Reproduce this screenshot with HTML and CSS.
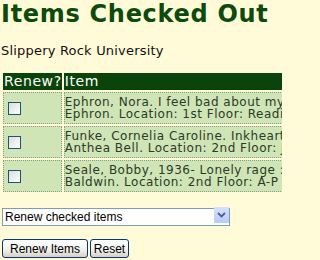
FILE: index.html
```html
<!DOCTYPE html>
<html>
<head>
<meta charset="utf-8">
<title>Items Checked Out</title>
<link rel="stylesheet" href="styles.css">
</head>
<body>
<h1 class="title">Items Checked Out</h1>
<p class="library">Slippery Rock University</p>
<form class="renew-form">
  <div class="table-clip">
  <table class="items">
    <thead>
      <tr>
        <th class="col-renew">Renew?</th>
        <th class="col-item">Item</th>
      </tr>
    </thead>
    <tbody>
      <tr>
        <td class="cell-check"><input type="checkbox" class="check"></td>
        <td class="cell-item">Ephron, Nora. I feel bad about my neck : and other thoughts on being a woman / Nora<br>Ephron. Location: 1st Floor: Reading Room Popular Collection</td>
      </tr>
      <tr>
        <td class="cell-check"><input type="checkbox" class="check"></td>
        <td class="cell-item">Funke, Cornelia Caroline. Inkheart / Cornelia Funke ; translated by<br>Anthea Bell. Location: 2nd Floor: Juvenile Collection</td>
      </tr>
      <tr>
        <td class="cell-check"><input type="checkbox" class="check"></td>
        <td class="cell-item">Seale, Bobby, 1936- Lonely rage : the autobiography of Bobby Seale / introd. by James<br>Baldwin. Location: 2nd Floor: A-P Stacks</td>
      </tr>
    </tbody>
  </table>
  </div>
  <div class="select-wrap">
    <select class="action">
      <option>Renew checked items</option>
      <option>Renew all items</option>
    </select>
    <span class="select-arrow"><svg width="9" height="6" viewBox="0 0 9 6"><path d="M1 1 L4.5 4.5 L8 1" fill="none" stroke="#4d6185" stroke-width="1.8"/></svg></span>
  </div>
  <div class="buttons">
    <button type="submit" class="btn btn-renew">Renew Items</button>
    <button type="reset" class="btn btn-reset">Reset</button>
  </div>
</form>
</body>
</html>
```
FILE: styles.css
```css
html, body {
  overflow: hidden;
}
body {
  margin: 0;
  padding: 0 0 0 1px;
  background: #fffbd8;
  font-family: "DejaVu Sans", Verdana, sans-serif;
  color: #222;
}
.title {
  margin: 0;
  font-size: 24px;
  font-weight: bold;
  line-height: 28px;
  letter-spacing: 0.7px;
  color: #0d4a0d;
  white-space: nowrap;
}
.library {
  margin: 15px 0 0 0;
  font-size: 13px;
  line-height: 15px;
  letter-spacing: 0.2px;
  color: #111;
}
.renew-form {
  margin: 13px 0 0 0;
}
.table-clip {
  overflow: hidden;
  width: 281px;
}
.items {
  border-collapse: separate;
  border-spacing: 2px;
  width: 640px;
}
.items th {
  background: #0b440b;
  color: #fff;
  font-weight: normal;
  font-size: 14px;
  line-height: 17px;
  letter-spacing: 0.6px;
  text-align: left;
  padding: 0 0 0 1px;
  white-space: nowrap;
}
.col-renew {
  width: 57px;
}
.items td {
  background: #cfe5b5;
  border: 1px dotted #8e9e86;
  height: 30px;
  padding: 0;
  vertical-align: middle;
}
.cell-check {
  padding-left: 4px !important;
}
.cell-item {
  font-size: 12px;
  line-height: 12px;
  letter-spacing: 0.5px;
  color: #2c3a2c;
  white-space: nowrap;
  padding-left: 0 !important;
}
.check {
  -webkit-appearance: none;
  appearance: none;
  display: block;
  margin: 0;
  width: 13px;
  height: 13px;
  border: 1px solid #1c5180;
  background: linear-gradient(135deg, #dcdcd7 0%, #f4f4f1 70%, #ffffff 100%);
}
.select-wrap {
  position: relative;
  width: 228px;
  height: 18px;
  margin: 12px 0 0 1px;
}
.action {
  -webkit-appearance: none;
  appearance: none;
  width: 228px;
  height: 18px;
  margin: 0;
  padding: 0 0 0 2px;
  border: 1px solid #7f9db9;
  background: #fff;
  font-family: "Liberation Sans", Arial, sans-serif;
  font-size: 12px;
  color: #000;
}
.select-arrow {
  position: absolute;
  right: 1px;
  top: 1px;
  width: 15px;
  height: 16px;
  background: linear-gradient(#d6e2fc, #b6cbf7);
  border-radius: 1px;
  display: flex;
  align-items: center;
  justify-content: center;
}
.buttons {
  display: flex;
  gap: 2px;
  margin: 15px 0 0 1px;
}
.btn {
  height: 19px;
  margin: 0;
  padding: 0;
  border: 1px solid #003c74;
  border-radius: 3px;
  background: linear-gradient(#ffffff, #f0f0ea 60%, #d6d0c5);
  font-family: "Liberation Sans", Arial, sans-serif;
  font-size: 12px;
  color: #000;
}
.btn-renew {
  width: 86px;
}
.btn-reset {
  width: 39px;
}
```
